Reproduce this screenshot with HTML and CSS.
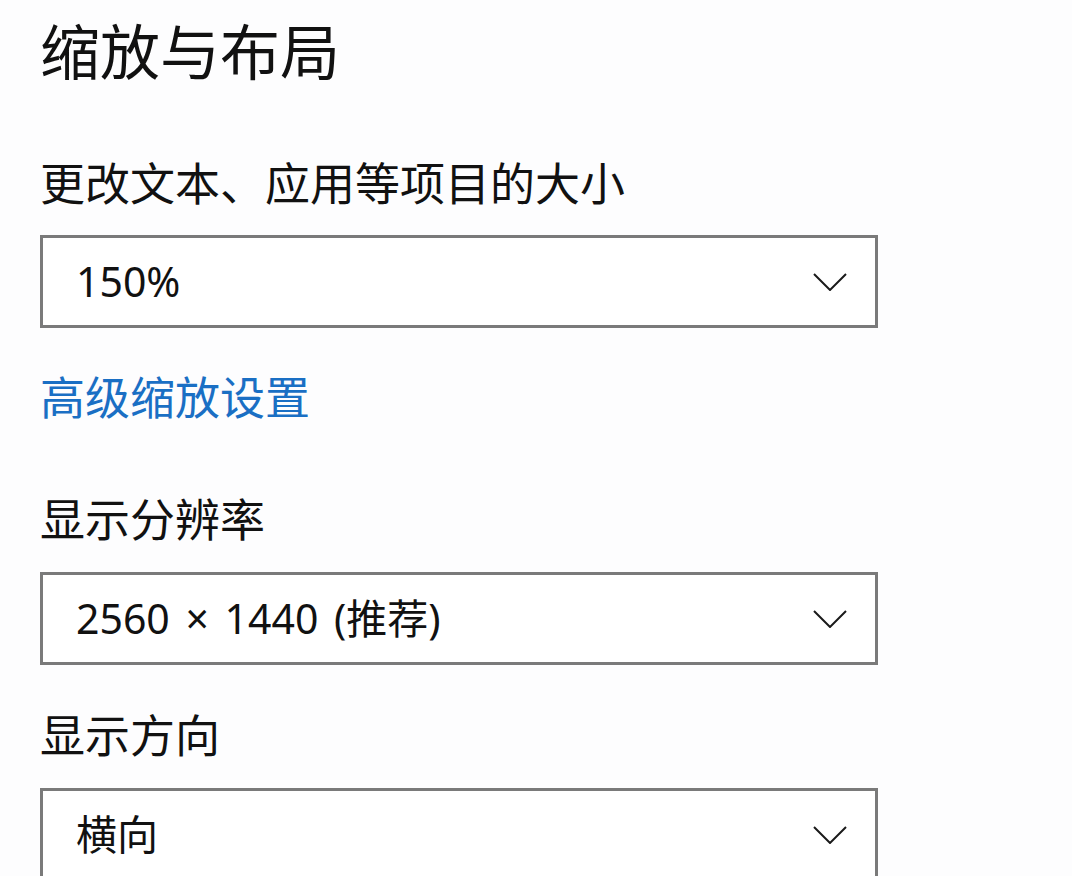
FILE: index.html
```html
<!DOCTYPE html>
<html lang="zh-CN">
<head>
  <meta charset="UTF-8" />
  <meta name="viewport" content="width=device-width, initial-scale=1.0"/>
  <title>缩放与布局</title>
  <link rel="stylesheet" href="styles.css">
</head>
<body>
  <div class="page">
    <h1 class="title">缩放与布局</h1>

    <div class="label first">更改文本、应用等项目的大小</div>
    <div class="dropdown">
      <span class="value">150%</span>
      <svg class="chevron" width="34" height="18" viewBox="0 0 34 18">
        <polyline points="1,1 17,17 33,1" fill="none" stroke="#1a1a1a" stroke-width="2"/>
      </svg>
    </div>

    <a class="link" href="#">高级缩放设置</a>

    <div class="label section">显示分辨率</div>
    <div class="dropdown">
      <span class="value">2560 × 1440 (推荐)</span>
      <svg class="chevron" width="34" height="18" viewBox="0 0 34 18">
        <polyline points="1,1 17,17 33,1" fill="none" stroke="#1a1a1a" stroke-width="2"/>
      </svg>
    </div>

    <div class="label">显示方向</div>
    <div class="dropdown">
      <span class="value">横向</span>
      <svg class="chevron" width="34" height="18" viewBox="0 0 34 18">
        <polyline points="1,1 17,17 33,1" fill="none" stroke="#1a1a1a" stroke-width="2"/>
      </svg>
    </div>
  </div>
</body>
</html>
```

FILE: styles.css
```css
html, body {
  margin: 0;
  height: 100%;
  overflow: hidden;
}

body {
  font-family: "Noto Sans", "Noto Sans CJK SC", sans-serif;
  background: #fdfdfe;
  color: #111;
}

.page {
  padding: 17px 0 0 40px;
  width: 838px;
}

.title {
  margin: 0;
  font-size: 60px;
  line-height: 70px;
  font-weight: normal;
}

.label {
  font-size: 45px;
  line-height: 60px;
  margin-top: 41px;
  margin-bottom: 22px;
}

.label.first {
  margin-top: 67px;
  margin-bottom: 21px;
}

.label.section {
  margin-top: 62px;
}

.dropdown {
  box-sizing: border-box;
  height: 93px;
  border: 3px solid #7a7a7a;
  background: #fff;
  display: flex;
  align-items: center;
  justify-content: space-between;
  padding: 0 28px 0 33px;
}

.value {
  font-size: 41px;
  line-height: 1;
  word-spacing: 5px;
}

.chevron {
  display: block;
}

.link {
  display: block;
  margin-top: 40px;
  font-size: 45px;
  line-height: 60px;
  color: #1a6fc4;
  text-decoration: none;
}
```
